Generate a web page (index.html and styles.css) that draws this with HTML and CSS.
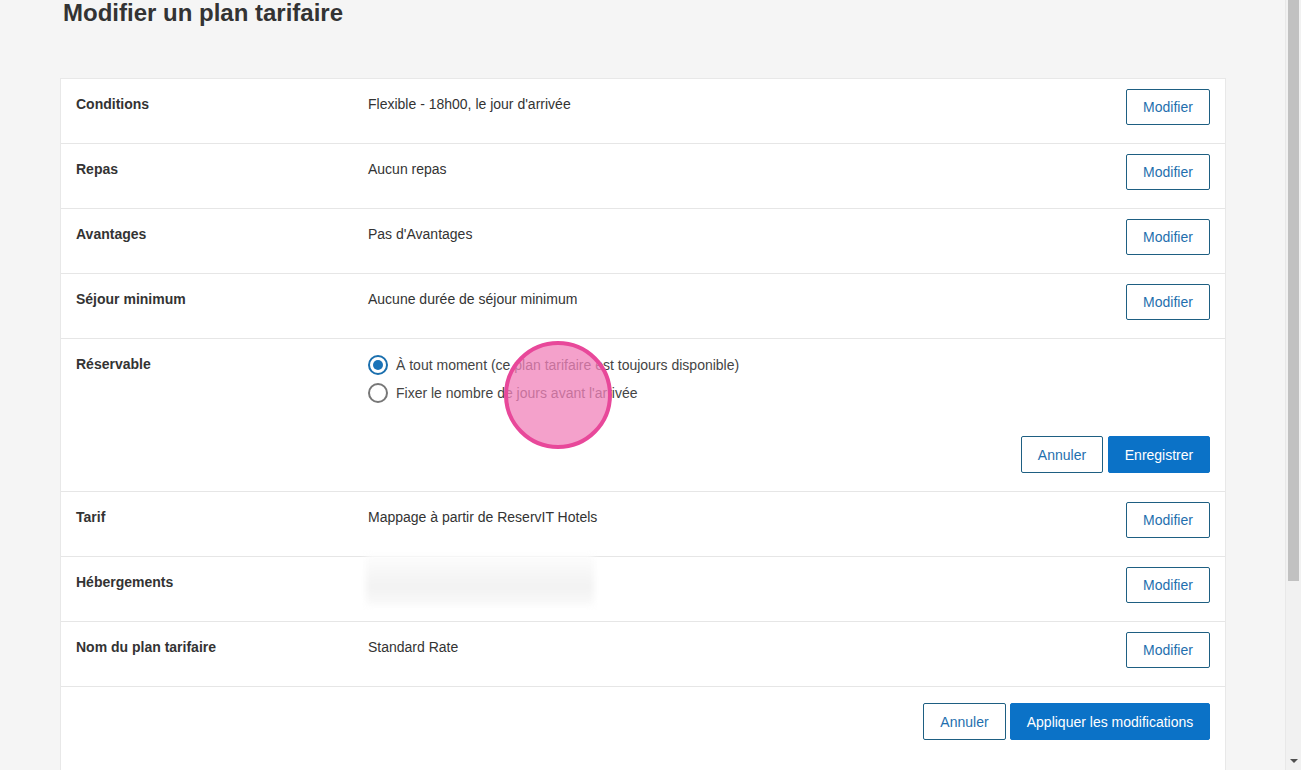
FILE: index.html
```html
<!DOCTYPE html>
<html lang="fr">
<head>
<meta charset="utf-8">
<title>Modifier un plan tarifaire</title>
<link rel="stylesheet" href="styles.css">
</head>
<body>
<div class="page">
  <h1 class="title">Modifier un plan tarifaire</h1>
  <div class="card">
    <div class="row">
      <div class="label">Conditions</div>
      <div class="value">Flexible - 18h00, le jour d'arrivée</div>
      <button class="btn btn-outline">Modifier</button>
    </div>
    <div class="row">
      <div class="label">Repas</div>
      <div class="value">Aucun repas</div>
      <button class="btn btn-outline">Modifier</button>
    </div>
    <div class="row">
      <div class="label">Avantages</div>
      <div class="value">Pas d'Avantages</div>
      <button class="btn btn-outline">Modifier</button>
    </div>
    <div class="row">
      <div class="label">Séjour minimum</div>
      <div class="value">Aucune durée de séjour minimum</div>
      <button class="btn btn-outline">Modifier</button>
    </div>
    <div class="row row-edit">
      <div class="label">Réservable</div>
      <div class="edit">
        <div class="radios">
          <label class="radio"><span class="dot checked"></span>À tout moment (ce plan tarifaire est toujours disponible)</label>
          <label class="radio"><span class="dot"></span>Fixer le nombre de jours avant l'arrivée</label>
        </div>
        <div class="actions">
          <button class="btn btn-outline btn-a1">Annuler</button>
          <button class="btn btn-primary btn-e">Enregistrer</button>
        </div>
      </div>
    </div>
    <div class="row">
      <div class="label">Tarif</div>
      <div class="value">Mappage à partir de ReservIT Hotels</div>
      <button class="btn btn-outline">Modifier</button>
    </div>
    <div class="row">
      <div class="label">Hébergements</div>
      <div class="value"><div class="blurred"></div></div>
      <button class="btn btn-outline">Modifier</button>
    </div>
    <div class="row">
      <div class="label">Nom du plan tarifaire</div>
      <div class="value">Standard Rate</div>
      <button class="btn btn-outline">Modifier</button>
    </div>
    <div class="footer">
      <button class="btn btn-outline btn-a2">Annuler</button>
      <button class="btn btn-primary btn-apply">Appliquer les modifications</button>
    </div>
  </div>
</div>
<div class="click-marker"></div>
<div class="scrollbar"><div class="thumb"></div><div class="arrow"></div></div>
</body>
</html>
```
FILE: styles.css
```css
html, body {
  margin: 0;
  padding: 0;
  height: 770px;
  overflow: hidden;
}
body {
  background: #f5f5f5;
  font-family: "Liberation Sans", Arial, sans-serif;
  font-size: 14px;
  color: #333;
}
.page {
  width: 1166px;
  padding: 0 60px;
  margin-top: -5px;
}
.title {
  margin: 0 0 47px 3px;
  font-size: 24px;
  line-height: 36px;
  font-weight: bold;
  color: #333;
  height: 36px;
}
.card {
  background: #fff;
  border: 1px solid #e8e8e8;
  height: 800px;
}
.row {
  display: grid;
  grid-template-columns: 292px 1fr auto;
  align-items: start;
  padding: 10px 15px 18px;
  border-bottom: 1px solid #e6e6e6;
  height: 36px;
}
.row-edit {
  height: auto;
  grid-template-columns: 292px 1fr;
}
.label {
  font-weight: bold;
  line-height: 20px;
  padding-top: 5px;
}
.value {
  line-height: 20px;
  padding-top: 5px;
  position: relative;
}
.btn {
  font-family: "Liberation Sans", Arial, sans-serif;
  font-size: 14px;
  height: 36px;
  border-radius: 2px;
  cursor: pointer;
}
.btn-outline {
  background: #fff;
  color: #1f6fae;
  border: 1px solid #1e5f82;
  width: 84px;
}
.btn-primary {
  background: #0b72c7;
  color: #fff;
  border: 1px solid #0b72c7;
}
.edit {
  display: flex;
  flex-direction: column;
}
.radios {
  display: flex;
  flex-direction: column;
  gap: 8px;
  padding-top: 6px;
}
.radio {
  display: flex;
  align-items: center;
  line-height: 20px;
  color: #444;
}
.dot {
  box-sizing: border-box;
  width: 20px;
  height: 20px;
  border: 2px solid #777;
  border-radius: 50%;
  margin-right: 8px;
  position: relative;
}
.dot.checked {
  border-color: #1a6fae;
}
.dot.checked::after {
  content: "";
  position: absolute;
  left: 3px;
  top: 3px;
  width: 10px;
  height: 10px;
  border-radius: 50%;
  background: #1a73b8;
}
.actions {
  display: flex;
  justify-content: flex-end;
  gap: 5px;
  margin-top: 33px;
}
.btn-a1 { width: 82px; height: 37px; }
.btn-e { width: 102px; height: 37px; }
.blurred {
  position: absolute;
  left: -2px;
  top: -12px;
  width: 228px;
  height: 50px;
  background: linear-gradient(180deg, #fdfdfd 0%, #f6f6f6 40%, #f2f2f2 65%, #fafafa 100%);
  filter: blur(3px);
}
.footer {
  display: flex;
  justify-content: flex-end;
  gap: 4px;
  padding: 16px 15px 0;
}
.btn-a2 { width: 83px; height: 37px; }
.btn-apply { width: 200px; height: 37px; }
.click-marker {
  position: absolute;
  left: 504px;
  top: 341px;
  width: 100px;
  height: 100px;
  border: 4px solid #e8489a;
  border-radius: 50%;
  background: rgba(240, 130, 185, 0.75);
}
.scrollbar {
  position: fixed;
  right: 0;
  top: 0;
  width: 15px;
  height: 770px;
  background: #f1f1f1;
  border-left: 1px solid #e8e8e8;
}
.thumb {
  position: absolute;
  left: 2px;
  top: 0;
  width: 11px;
  height: 581px;
  background: #c1c1c1;
}
.arrow {
  position: absolute;
  left: 4px;
  bottom: 7px;
  width: 0;
  height: 0;
  border-left: 4px solid transparent;
  border-right: 4px solid transparent;
  border-top: 4px solid #505050;
}
```
